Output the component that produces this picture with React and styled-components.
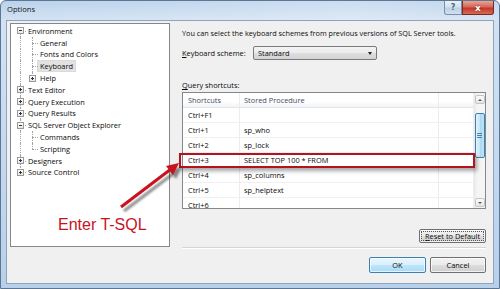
import React from "react";
import styled, { createGlobalStyle } from "styled-components";

const GlobalStyle = createGlobalStyle`
  html, body { margin: 0; padding: 0; background: #ffffff; }
  body { font-family: "Open Sans", "Noto Sans", sans-serif; }
`;

const UI = `"Open Sans", "Noto Sans", sans-serif`;

const Window = styled.div`
  position: relative;
  width: 500px;
  height: 289px;
  box-sizing: border-box;
  border: 1px solid #5d7693;
  border-radius: 6px 6px 0 0;
  background: linear-gradient(180deg, #bad2eb 0px, #d2e2f3 19px, #c3d8ee 60%, #b9d0ea 100%);
  display: flex;
  flex-direction: column;
  overflow: hidden;
`;

const TitleBar = styled.div`
  height: 19px;
  display: flex;
  align-items: flex-start;
  padding-left: 6px;
  background: linear-gradient(90deg, rgba(255,255,255,0) 0%, rgba(255,255,255,0.25) 70%, rgba(255,255,255,0.1) 100%);
`;

const Title = styled.div`
  font-family: ${UI};
  font-size: 7.6px;
  line-height: 16px;
  color: #111;
  flex: 1;
`;

const Caption = styled.div`
  display: flex;
  margin-right: 5px;
`;

const CapButton = styled.div`
  width: ${(p) => p.$w}px;
  height: 14px;
  box-sizing: border-box;
  border: 1px solid ${(p) => (p.$close ? "#7a2a22" : "#7d8ea6")};
  border-top: none;
  border-radius: ${(p) => (p.$close ? "0 0 3px 0" : "0 0 0 3px")};
  background: ${(p) =>
    p.$close
      ? "linear-gradient(180deg, #e7a496 0%, #d4685a 45%, #c1382a 55%, #d86a52 100%)"
      : "linear-gradient(180deg, #e9f1fa 0%, #d3e1f0 45%, #bcd0e7 55%, #cfdff0 100%)"};
  display: flex;
  align-items: center;
  justify-content: center;
  font-family: "DejaVu Sans", sans-serif;
  font-size: ${(p) => (p.$close ? 9 : 8)}px;
  font-weight: bold;
  color: ${(p) => (p.$close ? "#ffffff" : "#4b5e78")};
  text-shadow: ${(p) => (p.$close ? "0 0 2px #6a1a10" : "0 0 1px #ffffff")};
`;

const Client = styled.div`
  flex: 1;
  margin: 0 5px 4px 5px;
  border: 1px solid #8ea3bc;
  background: #f0f0f0;
  display: grid;
  grid-template-columns: 160px 1fr;
  column-gap: 12px;
  padding: 2px 7px 0 3px;
  font-family: ${UI};
  font-size: 7.4px;
  color: #0a0a0a;
`;

/* ---------- tree ---------- */

const Tree = styled.div`
  height: 224px;
  box-sizing: border-box;
  border: 1px solid #828790;
  background: #ffffff;
  padding: 1px 0 0 3px;
`;

const TreeRow = styled.div`
  display: flex;
  align-items: center;
  height: 11.8px;
`;

const Cell = styled.span`
  position: relative;
  width: 12px;
  height: 100%;
  display: flex;
  align-items: center;
  justify-content: center;
  flex: none;
  &::before {
    content: "";
    display: ${(p) => (p.$top || p.$bottom ? "block" : "none")};
    position: absolute;
    left: 6px;
    top: ${(p) => (p.$top ? "0" : "50%")};
    bottom: ${(p) => (p.$bottom ? "0" : "50%")};
    border-left: 1px dotted #a5a5a5;
  }
  &::after {
    content: "";
    display: ${(p) => (p.$h ? "block" : "none")};
    position: absolute;
    left: 6px;
    right: 0;
    top: 50%;
    border-top: 1px dotted #a5a5a5;
  }
`;

const Expander = styled.span`
  position: relative;
  z-index: 1;
  width: 7px;
  height: 7px;
  margin-left: 1px;
  box-sizing: border-box;
  border: 1px solid #9a9a9a;
  background: linear-gradient(180deg, #ffffff, #e6e6e6);
  &::before {
    content: "";
    position: absolute;
    left: 1px;
    right: 1px;
    top: 2px;
    height: 1px;
    background: #333;
  }
  &::after {
    content: "";
    display: ${(p) => (p.$open ? "none" : "block")};
    position: absolute;
    top: 1px;
    bottom: 1px;
    left: 2px;
    width: 1px;
    background: #333;
  }
`;

const NodeLabel = styled.span`
  padding: 0 2px;
  line-height: 10px;
  white-space: nowrap;
  background: ${(p) => (p.$selected ? "#e2e2e2" : "transparent")};
  outline: ${(p) => (p.$selected ? "1px solid #dadada" : "none")};
`;

const treeItems = [
  { label: "Environment", level: 0, top: false, bottom: true, exp: "open" },
  { label: "General", level: 1, top: true, bottom: true },
  { label: "Fonts and Colors", level: 1, top: true, bottom: true },
  { label: "Keyboard", level: 1, top: true, bottom: true, selected: true },
  { label: "Help", level: 1, top: true, bottom: false, exp: "closed" },
  { label: "Text Editor", level: 0, top: true, bottom: true, exp: "closed" },
  { label: "Query Execution", level: 0, top: true, bottom: true, exp: "closed" },
  { label: "Query Results", level: 0, top: true, bottom: true, exp: "closed" },
  { label: "SQL Server Object Explorer", level: 0, top: true, bottom: true, exp: "open" },
  { label: "Commands", level: 1, top: true, bottom: true },
  { label: "Scripting", level: 1, top: true, bottom: false },
  { label: "Designers", level: 0, top: true, bottom: true, exp: "closed" },
  { label: "Source Control", level: 0, top: true, bottom: false, exp: "closed" },
];

/* ---------- right side ---------- */

const Pane = styled.div`
  display: flex;
  flex-direction: column;
`;

const Info = styled.div`
  margin-top: 5px;
  line-height: 10px;
  font-size: 7.25px;
  white-space: nowrap;
`;

const SchemeRow = styled.div`
  display: flex;
  align-items: center;
  margin-top: 8px;
  height: 14px;
`;

const FieldLabel = styled.span`
  width: 71px;
  line-height: 10px;
  white-space: nowrap;
`;

const Key = styled.span`
  text-decoration: underline;
`;

const Combo = styled.div`
  width: 124px;
  height: 14px;
  box-sizing: border-box;
  border: 1px solid #7a7a7a;
  border-radius: 2px;
  background: linear-gradient(180deg, #f4f4f4 0%, #ebebeb 48%, #dedede 52%, #d4d4d4 100%);
  display: flex;
  align-items: center;
  justify-content: space-between;
  padding: 0 4px 0 4px;
`;

const ComboArrow = styled.span`
  width: 0;
  height: 0;
  border-left: 2.5px solid transparent;
  border-right: 2.5px solid transparent;
  border-top: 3px solid #222;
`;

const SectionLabel = styled.div`
  margin-top: 20px;
  line-height: 10px;
`;

const ListWrap = styled.div`
  position: relative;
  margin-top: 2px;
`;

const ListBox = styled.div`
  height: 117px;
  box-sizing: border-box;
  border: 1px solid #828790;
  background: #ffffff;
  display: flex;
  overflow: hidden;
`;

const Grid = styled.div`
  flex: 1;
  overflow: hidden;
`;

const GridRow = styled.div`
  display: flex;
  height: 15px;
  box-sizing: border-box;
  border-bottom: 1px solid ${(p) => (p.$head ? "#e3e6ea" : "#f0f0f0")};
  background: ${(p) => (p.$head ? "linear-gradient(180deg, #ffffff 0%, #ffffff 60%, #f3f4f6 100%)" : "#ffffff")};
  color: ${(p) => (p.$head ? "#3d4a5c" : "#0a0a0a")};
`;

const GridCell = styled.div`
  width: ${(p) => p.$w}px;
  flex: none;
  box-sizing: border-box;
  padding-left: ${(p) => p.$pad}px;
  border-right: 1px solid ${(p) => (p.$line ? "#ececec" : "transparent")};
  line-height: 14px;
  white-space: nowrap;
`;

const ScrollBar = styled.div`
  width: 12px;
  flex: none;
  background: linear-gradient(90deg, #e8e8e8, #f5f5f5 30%, #f5f5f5);
  border-left: 1px solid #eeeeee;
  display: flex;
  flex-direction: column;
  align-items: center;
  padding: 2px 0 1px;
  box-sizing: border-box;
`;

const ScrollBtn = styled.div`
  width: 10px;
  height: 9px;
  box-sizing: border-box;
  border: 1px solid #c4c4c4;
  border-radius: 2px;
  background: linear-gradient(180deg, #fbfbfb, #e6e6e6);
  display: flex;
  align-items: center;
  justify-content: center;
  &::before {
    content: "";
    border-left: 2px solid transparent;
    border-right: 2px solid transparent;
    ${(p) => (p.$up ? "border-bottom: 2px solid #5a5a5a;" : "border-top: 2px solid #5a5a5a;")}
  }
`;

const Thumb = styled.div`
  width: 10px;
  height: 45px;
  margin: 9px 0 auto;
  box-sizing: border-box;
  border: 1px solid #3c7fb1;
  border-radius: 2px;
  background: linear-gradient(90deg, #e3f4fc 0%, #c4e5f6 50%, #a9d9f2 52%, #bfe3f6 100%);
  display: flex;
  flex-direction: column;
  align-items: center;
  justify-content: center;
  gap: 1px;
`;

const Grip = styled.span`
  width: 5px;
  height: 1px;
  background: #4a7fa8;
`;

const Highlight = styled.div`
  position: absolute;
  left: -3px;
  top: 61px;
  width: 296px;
  height: 15px;
  box-sizing: border-box;
  border: 2px solid #b4121c;
  box-shadow: 2px 3px 4px rgba(0, 0, 0, 0.35);
  pointer-events: none;
`;

const ResetRow = styled.div`
  display: flex;
  justify-content: flex-end;
  margin-top: 20px;
`;

const Button = styled.div`
  width: ${(p) => p.$w}px;
  height: ${(p) => p.$h || 14}px;
  box-sizing: border-box;
  border: 1px solid ${(p) => (p.$default ? "#3c7fb1" : "#707070")};
  border-radius: 2px;
  background: ${(p) =>
    p.$default
      ? "linear-gradient(180deg, #eaf6fd 0%, #d9f0fc 48%, #bee6fd 52%, #a7d9f5 100%)"
      : "linear-gradient(180deg, #f2f2f2 0%, #ebebeb 48%, #dddddd 52%, #cfcfcf 100%)"};
  box-shadow: inset 0 0 0 1px rgba(255, 255, 255, 0.7);
  display: flex;
  align-items: center;
  justify-content: center;
  line-height: 10px;
  white-space: nowrap;
  ${(p) => p.$focus && "outline: 1px dotted #555; outline-offset: -3px;"}
`;

const Separator = styled.div`
  margin-top: 4px;
  height: 1px;
  background: #d5d5d5;
  border-bottom: 1px solid #ffffff;
`;

const Footer = styled.div`
  display: flex;
  justify-content: flex-end;
  gap: 4px;
  margin-top: 8px;
`;

/* ---------- annotation ---------- */

const Callout = styled.div`
  position: absolute;
  left: 57px;
  top: 215px;
  font-family: "Liberation Sans", Arial, sans-serif;
  font-size: 16px;
  color: #c8121e;
  white-space: nowrap;
`;

const ArrowSvg = styled.svg`
  position: absolute;
  left: 110px;
  top: 150px;
  overflow: visible;
`;

const rows = [
  ["Ctrl+F1", ""],
  ["Ctrl+1", "sp_who"],
  ["Ctrl+2", "sp_lock"],
  ["Ctrl+3", "SELECT TOP 100 * FROM"],
  ["Ctrl+4", "sp_columns"],
  ["Ctrl+5", "sp_helptext"],
  ["Ctrl+6", ""],
];

export default function App() {
  return (
    <>
      <GlobalStyle />
      <Window>
        <TitleBar>
          <Title>Options</Title>
          <Caption>
            <CapButton $w={18}>?</CapButton>
            <CapButton $w={32} $close>x</CapButton>
          </Caption>
        </TitleBar>
        <Client>
          <Tree>
            {treeItems.map((it) => (
              <TreeRow key={it.label}>
                {it.level === 1 && <Cell $top $bottom />}
                <Cell $top={it.top} $bottom={it.bottom} $h={!it.exp || it.level === 0}>
                  {it.exp && <Expander $open={it.exp === "open"} />}
                </Cell>
                <NodeLabel $selected={it.selected}>{it.label}</NodeLabel>
              </TreeRow>
            ))}
          </Tree>
          <Pane>
            <Info>You can select the keyboard schemes from previous versions of SQL Server tools.</Info>
            <SchemeRow>
              <FieldLabel>
                <Key>K</Key>eyboard scheme:
              </FieldLabel>
              <Combo>
                <span>Standard</span>
                <ComboArrow />
              </Combo>
            </SchemeRow>
            <SectionLabel>
              <Key>Q</Key>uery shortcuts:
            </SectionLabel>
            <ListWrap>
              <ListBox>
                <Grid>
                  <GridRow $head>
                    <GridCell $w={57} $pad={5} $line>Shortcuts</GridCell>
                    <GridCell $w={199} $pad={4} $line>Stored Procedure</GridCell>
                  </GridRow>
                  {rows.map(([k, v]) => (
                    <GridRow key={k}>
                      <GridCell $w={57} $pad={5} $line>{k}</GridCell>
                      <GridCell $w={199} $pad={4} $line>{v}</GridCell>
                    </GridRow>
                  ))}
                </Grid>
                <ScrollBar>
                  <ScrollBtn $up />
                  <Thumb>
                    <Grip />
                    <Grip />
                    <Grip />
                  </Thumb>
                  <ScrollBtn />
                </ScrollBar>
              </ListBox>
              <Highlight />
            </ListWrap>
            <ResetRow>
              <Button $w={67} $focus>
                <span>
                  <Key>R</Key>eset to Default
                </span>
              </Button>
            </ResetRow>
            <Separator />
            <Footer>
              <Button $w={57} $h={16} $default>OK</Button>
              <Button $w={56} $h={16}>Cancel</Button>
            </Footer>
          </Pane>
        </Client>
        <ArrowSvg width="80" height="70" viewBox="0 0 80 70">
          <defs>
            <filter id="sh" x="-20%" y="-20%" width="140%" height="140%">
              <feGaussianBlur stdDeviation="1.2" />
            </filter>
          </defs>
          <g transform="translate(3,4)" opacity="0.45" filter="url(#sh)">
            <line x1="10" y1="56" x2="60" y2="18" stroke="#000" strokeWidth="3" />
            <polygon points="68,12 55,15 62,24" fill="#000" />
          </g>
          <line x1="10" y1="56" x2="60" y2="18" stroke="#c8121e" strokeWidth="3" />
          <polygon points="68,12 55,15 62,24" fill="#c8121e" />
        </ArrowSvg>
        <Callout>Enter T-SQL</Callout>
      </Window>
    </>
  );
}
